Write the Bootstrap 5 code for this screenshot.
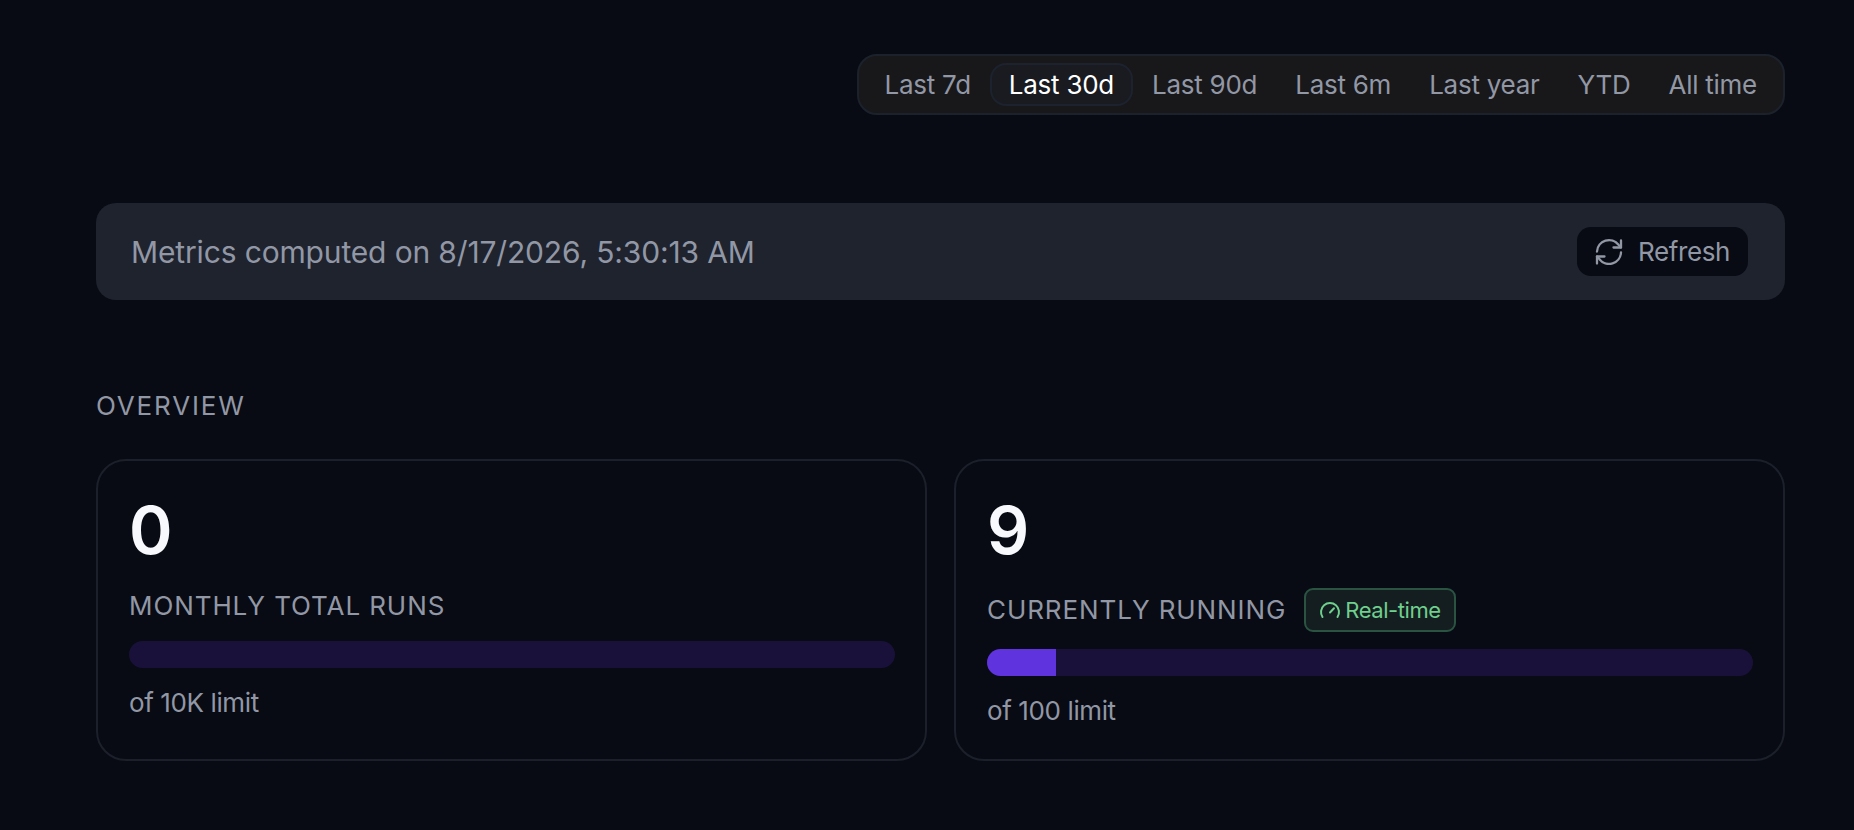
<!DOCTYPE html>
<html lang="en" data-bs-theme="dark">
<head>
<meta charset="utf-8">
<meta name="viewport" content="width=device-width, initial-scale=1">
<title>Metrics overview</title>
<link href="https://cdn.jsdelivr.net/npm/bootstrap@5.3.0/dist/css/bootstrap.min.css" rel="stylesheet">
<style>
  body { background: #080b13; color: #9297a5; font-family: Inter, "Liberation Sans", sans-serif; font-size: 26px; line-height: 36px; letter-spacing: -.015em; }
  .page { padding: 54px 69px 69px 96px; }
  .range-bar { background: #18181a; border: 2px solid #1c222c; border-radius: 20px; padding: 7px; }
  .range-bar .btn { --bs-btn-color: #9297a5; --bs-btn-hover-color: #fff; --bs-btn-active-color: #fff; --bs-btn-active-bg: #191b20; --bs-btn-active-border-color: #1c232e;
    font-size: 26px; line-height: 35px; padding: 2px 17px; border-width: 2px; border-radius: 16px; letter-spacing: -.01em; }
  .notice { background: #1e232e; border-radius: 20px; padding: 24px 37px 24px 35px; margin-top: 88px; font-size: 30px; letter-spacing: -.005em; }
  .btn-refresh { --bs-btn-color: #9297a5; --bs-btn-bg: #080b13; --bs-btn-hover-color: #fff; --bs-btn-hover-bg: #10141e;
    font-size: 26px; line-height: 37px; padding: 6px 18px; border: 0; border-radius: 14px; gap: 15px; letter-spacing: -.015em; }
  .caps { font-size: 26px; line-height: 36px; letter-spacing: .035em; text-transform: uppercase; font-weight: 400; }
  .overview-title { color: #9297a5; margin: 88px 0 35px; letter-spacing: .07em; }
  .stats { --bs-gutter-x: 27px; --bs-gutter-y: 27px; }
  .stat { --bs-card-bg: transparent; --bs-card-color: #9297a5; border: 2px solid #1b202b; border-radius: 30px; padding: 31px 30px 30px 31px; }
  .stat-value { color: #f8f9fc; font-size: 66px; line-height: 76px; font-weight: 600; margin-bottom: 20px; }
  .stat .progress { --bs-progress-height: 27px; --bs-progress-bg: #19113a; --bs-progress-bar-bg: #5f33de; --bs-progress-border-radius: 14px; margin: 17px 0; }
  .live-row { column-gap: 18px; }
  .live { background: #141d20; border: 2px solid #2a5441; border-radius: 9px; color: #6fcf8d; font-size: 22px; line-height: 32px; font-weight: 400; padding: 4px 13px; gap: 4px; letter-spacing: -.02em; }
</style>
</head>
<body>
<main class="page">
  <div class="d-flex justify-content-end">
    <div class="range-bar d-flex flex-wrap" role="group" aria-label="Time range">
      <button type="button" class="btn">Last 7d</button>
      <button type="button" class="btn active" aria-pressed="true">Last 30d</button>
      <button type="button" class="btn">Last 90d</button>
      <button type="button" class="btn">Last 6m</button>
      <button type="button" class="btn">Last year</button>
      <button type="button" class="btn">YTD</button>
      <button type="button" class="btn">All time</button>
    </div>
  </div>

  <div class="notice d-flex flex-wrap align-items-center justify-content-between">
    <span>Metrics computed on 8/17/2026, 5:30:13 AM</span>
    <button type="button" class="btn btn-refresh d-flex align-items-center">
      <svg width="28" height="28" viewBox="0 0 28 28" fill="none" stroke="currentColor" stroke-width="2.300" stroke-linecap="round" stroke-linejoin="round" aria-hidden="true">
        <path d="M2 13.500A12 12 0 0 1 23.500 6.800L26 9.500"/><path d="M26 2.500v7h-7.500"/>
        <path d="M26 14.500A12 12 0 0 1 4.500 21.200L2 18.500"/><path d="M2 25.500v-7h7.500"/>
      </svg>
      Refresh
    </button>
  </div>

  <h2 class="caps overview-title">Overview</h2>

  <div class="row stats">
    <div class="col-12 col-md-6">
      <div class="card stat h-100">
        <div class="stat-value">0</div>
        <div class="caps">Monthly total runs</div>
        <div class="progress" role="progressbar" aria-label="Monthly total runs" aria-valuenow="0" aria-valuemin="0" aria-valuemax="100"><div class="progress-bar" style="width: 0%"></div></div>
        <div>of 10K limit</div>
      </div>
    </div>
    <div class="col-12 col-md-6">
      <div class="card stat h-100">
        <div class="stat-value">9</div>
        <div class="live-row d-flex flex-wrap align-items-center">
          <span class="caps">Currently running</span>
          <span class="live badge d-inline-flex align-items-center">
            <svg width="22" height="22" viewBox="0 0 22 22" fill="none" stroke="currentColor" stroke-width="2" stroke-linecap="round" aria-hidden="true">
              <path d="M3.500 18A9 9 0 1 1 18.500 18"/><path d="M11 13.500L15 9.200"/>
            </svg>
            Real-time
          </span>
        </div>
        <div class="progress" role="progressbar" aria-label="Currently running" aria-valuenow="9" aria-valuemin="0" aria-valuemax="100"><div class="progress-bar" style="width: 9%"></div></div>
        <div>of 100 limit</div>
      </div>
    </div>
  </div>
</main>
<script src="https://cdn.jsdelivr.net/npm/bootstrap@5.3.0/dist/js/bootstrap.bundle.min.js"></script>
</body>
</html>
